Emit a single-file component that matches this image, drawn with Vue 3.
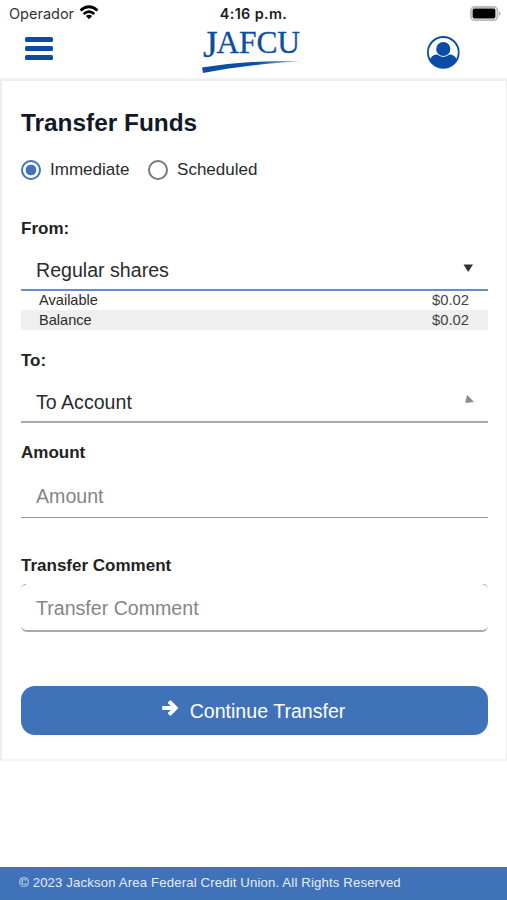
<script setup>
import { ref } from 'vue'

const mode = ref('immediate')
const modes = [
  { id: 'immediate', label: 'Immediate' },
  { id: 'scheduled', label: 'Scheduled' },
]
const balances = [
  { label: 'Available', value: '$0.02' },
  { label: 'Balance', value: '$0.02' },
]
const amount = ref('')
const comment = ref('')
</script>

<template>
  <div class="screen">
    <div class="status">
      <div class="carrier">
        <span>Operador</span>
        <svg class="wifi" viewBox="0 0 20 15">
          <g fill="none" stroke="#000" stroke-width="2.7">
            <path d="M1.5 5.4Q10 -1.9 18.5 5.4" />
            <path d="M4.7 9Q10 4.4 15.3 9" />
          </g>
          <path d="M6.9 11.1Q10 8.6 13.1 11.1L10 14.2Z" />
        </svg>
      </div>
      <div class="clock">4:16 p.m.</div>
      <svg class="battery" viewBox="0 0 32 16">
        <rect x="1" y="1" width="26.4" height="13.2" rx="3.8" fill="#fff" stroke="#b9b9b9" stroke-width="1.8" />
        <rect x="2.6" y="2.6" width="22.8" height="10" rx="1.8" />
        <path d="M29 5.2Q32.2 7.6 29 10Z" fill="#aaa" />
      </svg>
    </div>

    <header class="header">
      <button class="menu" aria-label="Menu"><i></i><i></i><i></i></button>
      <div class="brand">
        <div class="wordmark"><span class="initial">J</span><span>AFCU</span></div>
        <svg class="swoosh" viewBox="0 0 100 14">
          <defs>
            <linearGradient id="fade" x1="0" x2="1">
              <stop offset="0.55" stop-color="#0b4ea2" />
              <stop offset="1" stop-color="#0b4ea2" stop-opacity="0.35" />
            </linearGradient>
          </defs>
          <path d="M0 7.6C28 3 62 .2 98 1.2C62 3.4 30 7.4 1 12.9Z" fill="url(#fade)" />
        </svg>
      </div>
      <button class="profile" aria-label="Profile">
        <svg viewBox="0 0 34 34" fill="#0a4da6">
          <circle cx="17.3" cy="17.4" r="15.4" fill="#fff" stroke="#0a4da6" stroke-width="1.8" />
          <circle cx="17.3" cy="14" r="7.1" />
          <path d="M3.6 25C5 21.2 8.5 19.5 11.3 19.6Q17.3 24.4 23.3 19.6C26.1 19.5 29.6 21.2 31 25C28 30.6 22.8 33 17.3 33S6.6 30.6 3.6 25Z" />
        </svg>
      </button>
    </header>

    <main class="card">
      <h1>Transfer Funds</h1>

      <div class="modes">
        <label v-for="m in modes" :key="m.id" class="mode">
          <input v-model="mode" type="radio" name="mode" :value="m.id" />
          <span class="dot"></span>
          <span>{{ m.label }}</span>
        </label>
      </div>

      <h2 class="from-label">From:</h2>
      <div class="select active">
        <span>Regular shares</span>
        <svg class="caret" viewBox="0 0 12 12"><path d="M.5 2.4H10L5.2 9.9Z" fill="#333" /></svg>
      </div>
      <div v-for="b in balances" :key="b.label" class="balance">
        <span>{{ b.label }}</span>
        <span class="value">{{ b.value }}</span>
      </div>

      <h2 class="to-label">To:</h2>
      <div class="select">
        <span>To Account</span>
        <svg class="caret" viewBox="0 0 12 12"><path d="M4 .8L11 8L2.3 9Z" fill="#8b8b8b" /></svg>
      </div>

      <h2 class="amount-label">Amount</h2>
      <input v-model="amount" class="field" placeholder="Amount" />

      <h2 class="comment-label">Transfer Comment</h2>
      <div class="comment-box">
        <input v-model="comment" class="comment" placeholder="Transfer Comment" />
      </div>

      <button class="submit">
        <svg class="arrow" viewBox="0 0 18 18">
          <path d="M1.3 9H14M8 2.3L14.6 9L8 15.7" fill="none" stroke="#fff" stroke-width="4" />
        </svg>
        <span class="submit-text">Continue Transfer</span>
      </button>
    </main>

    <footer class="footer"><span>© 2023 Jackson Area Federal Credit Union. All Rights Reserved</span></footer>
  </div>
</template>

<style>
body {
  margin: 0;
  background: #fff;
}
</style>

<style scoped>
* {
  box-sizing: border-box;
}
button {
  padding: 0;
  border: 0;
  background: none;
}
svg {
  display: block;
}
.screen {
  display: flex;
  flex-direction: column;
  width: 507px;
  height: 900px;
  overflow: hidden;
  background: #fff;
  color: #2b2b2d;
  font-family: "Liberation Sans", Arial, sans-serif;
}
.status {
  display: grid;
  grid-template-columns: 1fr auto 1fr;
  align-items: center;
  height: 27px;
  padding: 0 9px;
  font-family: Inter, sans-serif;
  flex: none;
}
.carrier {
  display: flex;
  align-items: center;
  gap: 5px;
  font-size: 14.5px;
  color: #333;
}
.wifi {
  width: 20px;
  height: 15px;
  margin-bottom: 2px;
}
.clock {
  font-size: 14.4px;
  font-weight: 600;
  letter-spacing: 0.35px;
  color: #1c1c1c;
}
.battery {
  width: 32px;
  height: 16px;
  margin-right: -4px;
  justify-self: end;
}
.header {
  display: grid;
  grid-template-columns: 1fr 100px 1fr;
  height: 52px;
  padding: 0 47px 0 44px;
  border-bottom: 1px solid #f4f4f4;
  flex: none;
}
.menu {
  display: flex;
  flex-direction: column;
  gap: 4px;
  width: 28px;
  height: 24px;
  margin: 10px 0 0 -19px;
}
.menu i {
  height: 5px;
  border-radius: 1.5px;
  background: #0a4da6;
}
.brand {
  display: flex;
  flex-direction: column;
  width: 100px;
}
.wordmark {
  display: flex;
  height: 33px;
  padding-left: 1px;
  font: 31.5px/32px "Liberation Serif", serif;
  letter-spacing: -0.1px;
  color: #0b4ea2;
  -webkit-text-stroke: 0.3px #0b4ea2;
}
.initial {
  font-size: 38px;
  line-height: 35px;
  letter-spacing: -1.4px;
}
.swoosh {
  width: 100px;
  height: 14px;
}
.profile {
  justify-self: end;
  width: 34px;
  height: 34px;
  margin-top: 8px;
}
.card {
  display: flex;
  flex-direction: column;
  height: 682px;
  padding: 27px 18px 0 19px;
  border: 2px solid #eee;
  border-right-width: 1px;
  border-bottom-color: #f3f3f3;
  flex: none;
}
h1 {
  margin: 0;
  font-size: 24.4px;
  line-height: 30px;
  color: #111827;
}
h2 {
  margin: 0;
  font-size: 17px;
  line-height: 20px;
  color: #222;
}
.modes {
  display: flex;
  gap: 18.5px;
  margin-top: 21px;
}
.mode {
  display: flex;
  align-items: center;
  gap: 9px;
  height: 22px;
  font-size: 17.05px;
}
.mode input {
  display: none;
}
.dot {
  width: 20px;
  height: 20px;
  border: 2px solid #777;
  border-radius: 50%;
}
.mode input:checked + .dot {
  border-color: #4073bb;
  background: radial-gradient(circle, #4073bb 5px, #fff 5.7px);
}
.from-label {
  margin-top: 38px;
}
.select {
  display: flex;
  align-items: center;
  justify-content: space-between;
  height: 42px;
  margin-top: 10px;
  padding: 2px 13px 0 15px;
  border-bottom: 2px solid #aaa;
  font-size: 19.6px;
}
.select.active {
  border-color: #638fc9;
}
.caret {
  width: 12px;
  height: 12px;
  margin-bottom: 5px;
}
.balance {
  display: flex;
  align-items: center;
  justify-content: space-between;
  height: 19px;
  padding: 0 19px 2px 18px;
  font-size: 14.6px;
}
.balance + .balance {
  height: 20px;
  padding-bottom: 0;
  background: #efefef;
}
.value {
  color: #444;
  font-size: 14.8px;
}
.to-label {
  margin-top: 21px;
}
.amount-label {
  margin-top: 20px;
}
.field {
  height: 42px;
  margin-top: 13px;
  padding: 0 15px;
  border: 0;
  border-bottom: 1px solid #999;
  background: none;
  font: 19.6px "Liberation Sans", Arial, sans-serif;
  outline: 0;
}
.field::placeholder,
.comment::placeholder {
  color: #858585;
  opacity: 1;
}
.comment-label {
  margin-top: 38px;
}
.comment-box {
  position: relative;
  height: 48px;
  margin-top: 8px;
  border-bottom: 2px solid #aaa;
  border-radius: 6px;
}
.comment-box::before,
.comment-box::after {
  content: "";
  position: absolute;
  top: 0;
  width: 5px;
  height: 5px;
  border-top: 1px solid #aaa;
}
.comment-box::before {
  left: 0;
  border-top-left-radius: 6px;
}
.comment-box::after {
  right: 0;
  border-top-right-radius: 6px;
}
.comment {
  width: 100%;
  height: 46px;
  padding: 2px 15px 0;
  border: 0;
  background: none;
  font: 19.6px "Liberation Sans", Arial, sans-serif;
  outline: 0;
}
.submit {
  display: flex;
  align-items: center;
  justify-content: center;
  gap: 11px;
  height: 49px;
  margin-top: 54px;
  padding-right: 3px;
  border-radius: 14px;
  background: #4072b9;
  color: #fff;
  font: 19.6px "Liberation Sans", Arial, sans-serif;
}
.submit-text {
  padding-top: 2px;
}
.arrow {
  width: 18px;
  height: 18px;
  margin-bottom: 6px;
}
.footer {
  height: 33px;
  margin-top: auto;
  padding-left: 19px;
  background: #4072b9;
  color: #e4eefb;
  font-size: 13.2px;
  line-height: 31px;
  letter-spacing: 0.14px;
}
</style>
